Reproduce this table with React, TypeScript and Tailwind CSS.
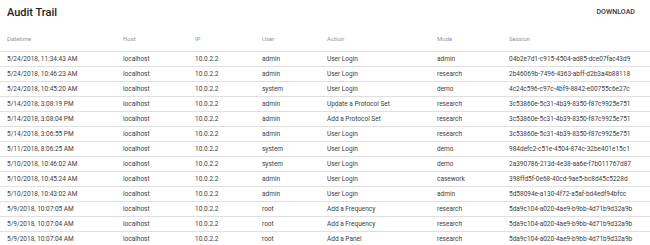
const ROWS = [
  ['5/24/2018, 11:34:43 AM', 'localhost', '10.0.2.2', 'admin', 'User Login', 'admin', '04b2e7d1-c915-4504-ad85-dce07fac43d9'],
  ['5/24/2018, 10:46:23 AM', 'localhost', '10.0.2.2', 'admin', 'User Login', 'research', '2b46069b-7496-4363-abff-d2b3a4b88118'],
  ['5/24/2018, 10:45:20 AM', 'localhost', '10.0.2.2', 'system', 'User Login', 'demo', '4c24c596-c97c-4bf9-8842-e00755c6e27c'],
  ['5/14/2018, 3:08:19 PM', 'localhost', '10.0.2.2', 'admin', 'Update a Protocol Set', 'research', '3c53860e-5c31-4b39-8350-f87c9925e751'],
  ['5/14/2018, 3:08:04 PM', 'localhost', '10.0.2.2', 'admin', 'Add a Protocol Set', 'research', '3c53860e-5c31-4b39-8350-f87c9925e751'],
  ['5/14/2018, 3:06:55 PM', 'localhost', '10.0.2.2', 'admin', 'User Login', 'research', '3c53860e-5c31-4b39-8350-f87c9925e751'],
  ['5/11/2018, 8:06:25 AM', 'localhost', '10.0.2.2', 'system', 'User Login', 'demo', '984defc2-c51e-4504-874c-32be401e15c1'],
  ['5/10/2018, 10:46:02 AM', 'localhost', '10.0.2.2', 'system', 'User Login', 'demo', '2a390786-213d-4e38-aa6e-f7b011767d87'],
  ['5/10/2018, 10:45:24 AM', 'localhost', '10.0.2.2', 'admin', 'User Login', 'casework', '398ffd5f-0e68-40cd-9ae5-bc8d45c5228d'],
  ['5/10/2018, 10:43:02 AM', 'localhost', '10.0.2.2', 'admin', 'User Login', 'admin', '5d58094e-a130-4f72-a5af-bd4edf94bfcc'],
  ['5/9/2018, 10:07:05 AM', 'localhost', '10.0.2.2', 'root', 'Add a Frequency', 'research', '5da9c104-a020-4ae9-b9bb-4d71b9d32a9b'],
  ['5/9/2018, 10:07:04 AM', 'localhost', '10.0.2.2', 'root', 'Add a Frequency', 'research', '5da9c104-a020-4ae9-b9bb-4d71b9d32a9b'],
  ['5/9/2018, 10:07:04 AM', 'localhost', '10.0.2.2', 'root', 'Add a Panel', 'research', '5da9c104-a020-4ae9-b9bb-4d71b9d32a9b'],
]

const COLS = ['Datetime', 'Host', 'IP', 'User', 'Action', 'Mode', 'Session']

export default function App() {
  return (
    <div className="w-[650px] h-[245px] overflow-hidden bg-white font-['Roboto',sans-serif]">
      {/* Toolbar */}
      <div className="h-[27px] flex items-start justify-between pl-[7px] pr-[15px]">
        <h1 className="text-[11px] leading-none font-medium text-[#222] mt-[7px]">Audit Trail</h1>
        <button className="text-[7px] leading-none font-medium tracking-[0.01em] text-[#333] mt-[9px]">
          DOWNLOAD
        </button>
      </div>

      {/* Table */}
      <table className="w-full table-fixed border-collapse">
        <colgroup>
          <col className="w-[123px]" />
          <col className="w-[72px]" />
          <col className="w-[67px]" />
          <col className="w-[65px]" />
          <col className="w-[110px]" />
          <col className="w-[72px]" />
          <col />
        </colgroup>
        <thead>
          <tr className="h-[24px] border-b border-[#e0e0e0]">
            {COLS.map((c, i) => (
              <th
                key={c}
                className={`text-left font-normal text-[6px] leading-none text-[#959595] p-0 ${i === 0 ? 'pl-[7px]' : ''}`}
              >
                {c}
              </th>
            ))}
          </tr>
        </thead>
        <tbody>
          {ROWS.map((row, r) => (
            <tr key={r} className="h-[15px] border-b border-[#e0e0e0]">
              {row.map((cell, i) => (
                <td
                  key={i}
                  className={`text-[6.5px] leading-none text-[#3d3d3d] p-0 pt-px whitespace-nowrap ${i === 0 ? 'pl-[7px]' : ''}`}
                >
                  {cell}
                </td>
              ))}
            </tr>
          ))}
        </tbody>
      </table>
    </div>
  )
}
